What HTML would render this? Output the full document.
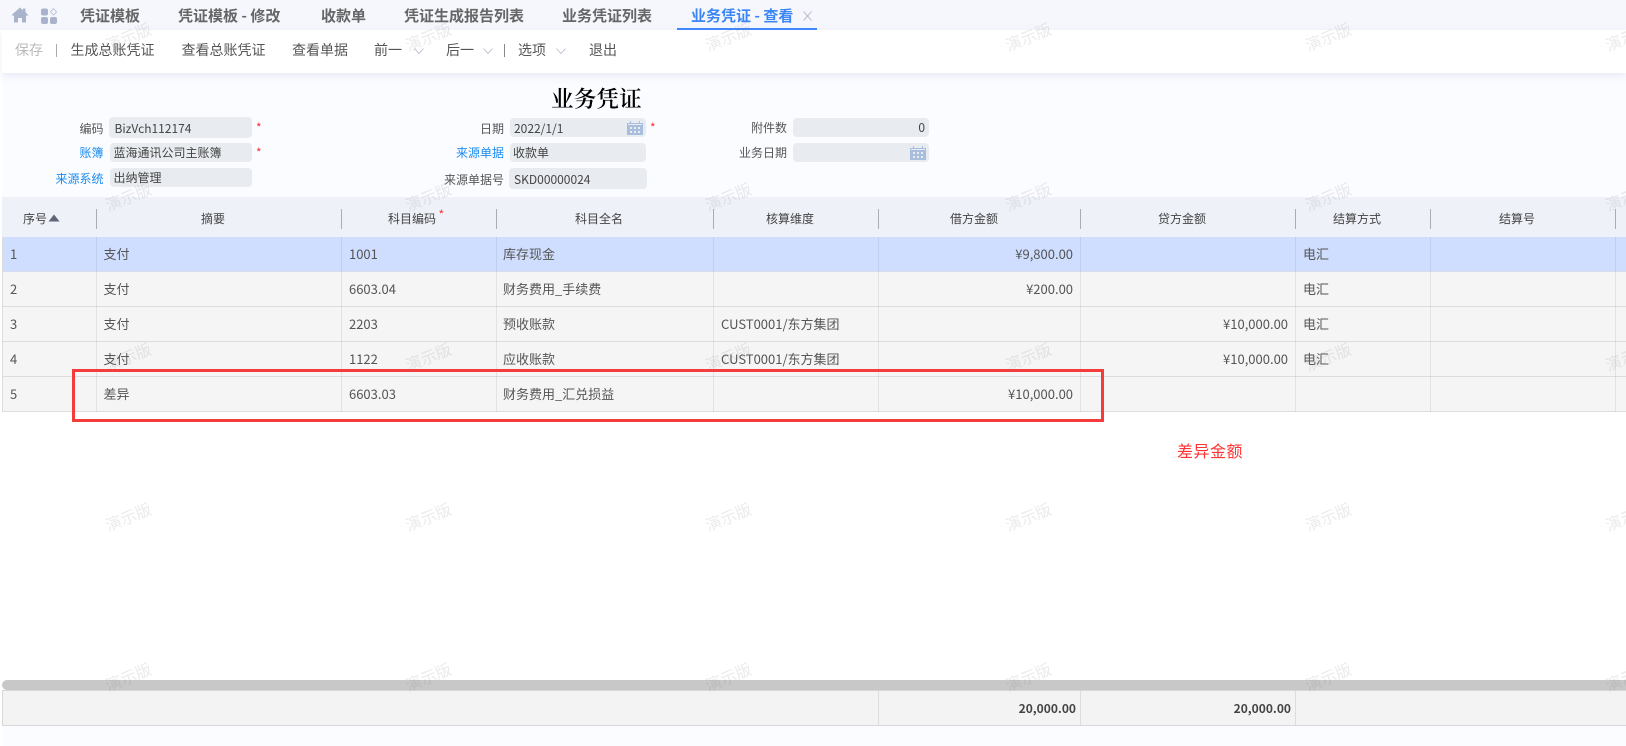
<!DOCTYPE html>
<html lang="zh">
<head>
<meta charset="utf-8">
<title>业务凭证</title>
<style>
html,body{margin:0;padding:0}
body{width:1626px;height:746px;position:relative;overflow:hidden;background:#fff;font-family:"Noto Sans CJK SC","Liberation Sans",sans-serif;color:#444}
div,span{position:absolute;box-sizing:border-box}
.t{white-space:nowrap;line-height:20px}
.tab{font-size:15px;font-weight:700;color:#666;top:6px}
.bar{font-size:14px;color:#555;top:40px}
.lb{font-size:12px;color:#555;text-align:right}
.bl{color:#1a8cf0}
.v{font-size:12px;color:#444}
.in{background:#e8ebef;border-radius:4px}
.st{color:#f33;font-size:12px;line-height:12px}
.h{font-size:12px;color:#444;top:209px}
.c{font-size:13px;color:#555}
.r{text-align:right}
.row{left:2px;width:1624px;height:35px;background:#f5f5f5;border-bottom:1px solid #dcdcdc}
.col{top:237px;height:175px;width:1px;background:rgba(0,0,0,.07)}
.sep{top:209px;height:20px;width:1px;background:#a9aeb6}
.fs{top:691px;height:34px;width:1px;background:#dcdcdc}
.w{font-size:16px;line-height:20px;color:rgba(120,120,120,.15);transform:translate(-50%,-50%) rotate(-22deg);white-space:nowrap;z-index:9}
</style>
</head>
<body>
<!-- page backgrounds -->
<div style="left:2px;top:30px;width:1624px;height:167px;background:#fbfcff"></div>
<div style="left:0;top:0;width:1626px;height:30px;background:#f5f7fc"></div>
<div style="left:2px;top:30px;width:1624px;height:43px;background:#fff;box-shadow:0 3px 8px rgba(190,200,225,.3)"></div>
<div style="left:2px;top:725px;width:1624px;height:21px;background:#fbfcff"></div>

<!-- tab icons -->
<svg style="position:absolute;left:12px;top:7px" width="16" height="16" viewBox="0 0 16 16"><path d="M8 0.5L11 3.2V1.5h2.5v3.9L16 7.6V8.6H14V15.5H10V11H6V15.5H2V8.6H0V7.6z" fill="#a9b4cc"/></svg>
<svg style="position:absolute;left:41px;top:8px" width="16" height="16" viewBox="0 0 16 16"><rect x="0" y="0.5" width="7" height="7" rx="2" fill="#a9b4cc"/><rect x="0" y="9" width="7" height="7" rx="2" fill="#a9b4cc"/><rect x="9" y="9" width="7" height="7" rx="2" fill="#a9b4cc"/><path d="M12.5 0.6L15.6 3.8L12.5 7L9.4 3.8z" fill="none" stroke="#b4bdd2" stroke-width=".8"/></svg>

<!-- tabs -->
<span class="t tab" style="left:80px">凭证模板</span>
<span class="t tab" style="left:178px">凭证模板 - 修改</span>
<span class="t tab" style="left:321px">收款单</span>
<span class="t tab" style="left:404px">凭证生成报告列表</span>
<span class="t tab" style="left:562px">业务凭证列表</span>
<span class="t tab" style="left:691px;color:#3a86f5">业务凭证 - 查看</span>
<svg style="position:absolute;left:803px;top:11px" width="9" height="10" viewBox="0 0 9 10"><path d="M.5.5l8 9M8.5.5l-8 9" stroke="#aab2c4" stroke-width=".9" fill="none"/></svg>
<div style="left:677px;top:28px;width:140px;height:2px;background:#3f86ff"></div>

<!-- toolbar -->
<span class="t bar" style="left:15px;color:#bbb">保存</span>
<div style="left:56px;top:44px;width:1px;height:13px;background:#aaa"></div>
<span class="t bar" style="left:70.5px">生成总账凭证</span>
<span class="t bar" style="left:181.5px">查看总账凭证</span>
<span class="t bar" style="left:292px">查看单据</span>
<span class="t bar" style="left:374px">前一</span>
<svg style="position:absolute;left:414px;top:48px" width="10" height="6" viewBox="0 0 10 6"><path d="M.5.5L5 5.5L9.5.5" fill="none" stroke="#b4bccc" stroke-width=".9"/></svg>
<span class="t bar" style="left:446px">后一</span>
<svg style="position:absolute;left:483px;top:48px" width="10" height="6" viewBox="0 0 10 6"><path d="M.5.5L5 5.5L9.5.5" fill="none" stroke="#b4bccc" stroke-width=".9"/></svg>
<div style="left:504px;top:44px;width:1px;height:13px;background:#888"></div>
<span class="t bar" style="left:518px">选项</span>
<svg style="position:absolute;left:556px;top:48px" width="10" height="6" viewBox="0 0 10 6"><path d="M.5.5L5 5.5L9.5.5" fill="none" stroke="#b4bccc" stroke-width=".9"/></svg>
<span class="t bar" style="left:589px">退出</span>

<!-- title -->
<span class="t" style="left:551px;top:85px;font-family:'Noto Serif CJK SC','Liberation Serif',serif;font-size:22.5px;font-weight:600;line-height:26px;letter-spacing:.2px;color:#000">业务凭证</span>

<!-- form -->
<div class="in" style="left:109px;top:117px;width:143px;height:21px"></div>
<div class="in" style="left:110px;top:143px;width:142px;height:19px"></div>
<div class="in" style="left:110px;top:168px;width:142px;height:19px"></div>
<div class="in" style="left:510px;top:118px;width:136px;height:19px"></div>
<div class="in" style="left:510px;top:143px;width:136px;height:19px"></div>
<div class="in" style="left:509px;top:168px;width:138px;height:21px"></div>
<div class="in" style="left:793px;top:118px;width:136px;height:19px"></div>
<div class="in" style="left:793px;top:143px;width:136px;height:19px"></div>

<span class="t lb" style="right:1522.5px;top:119px">编码</span>
<span class="t lb bl" style="right:1522.5px;top:143px">账簿</span>
<span class="t lb bl" style="right:1522.5px;top:169px">来源系统</span>
<span class="t lb" style="right:1122px;top:119px">日期</span>
<span class="t lb bl" style="right:1122px;top:143px">来源单据</span>
<span class="t lb" style="right:1122px;top:170px">来源单据号</span>
<span class="t lb" style="right:839px;top:118px">附件数</span>
<span class="t lb" style="right:839px;top:143px">业务日期</span>

<span class="t v" style="left:114.5px;top:119px">BizVch112174</span>
<span class="t v" style="left:113.5px;top:143px">蓝海通讯公司主账簿</span>
<span class="t v" style="left:113.5px;top:168px">出纳管理</span>
<span class="t v" style="left:514px;top:119px">2022/1/1</span>
<span class="t v" style="left:513px;top:143px">收款单</span>
<span class="t v" style="left:514px;top:170px">SKD00000024</span>
<span class="t v" style="right:701px;top:118px">0</span>

<span class="t st" style="left:256px;top:122px">*</span>
<span class="t st" style="left:256px;top:147px">*</span>
<span class="t st" style="left:650px;top:122px">*</span>

<svg style="position:absolute;left:627px;top:121px" width="16" height="14" viewBox="0 0 16 14"><path d="M0 2h3V0h1v2h8V0h1v2h3v12H0z" fill="#a9bedd"/><g fill="#e8ebef"><rect x="1" y="3" width="14" height="1"/><rect x="3" y="6" width="2" height="2"/><rect x="7" y="6" width="2" height="2"/><rect x="11" y="6" width="2" height="2"/><rect x="3" y="10" width="2" height="2"/><rect x="7" y="10" width="2" height="2"/><rect x="11" y="10" width="2" height="2"/></g></svg>
<svg style="position:absolute;left:910px;top:146px" width="16" height="14" viewBox="0 0 16 14"><path d="M0 2h3V0h1v2h8V0h1v2h3v12H0z" fill="#a9bedd"/><g fill="#e8ebef"><rect x="1" y="3" width="14" height="1"/><rect x="3" y="6" width="2" height="2"/><rect x="7" y="6" width="2" height="2"/><rect x="11" y="6" width="2" height="2"/><rect x="3" y="10" width="2" height="2"/><rect x="7" y="10" width="2" height="2"/><rect x="11" y="10" width="2" height="2"/></g></svg>

<!-- table header -->
<div style="left:2px;top:197px;width:1624px;height:40px;background:#eef1f8"></div>
<div class="sep" style="left:96px"></div>
<div class="sep" style="left:341px"></div>
<div class="sep" style="left:496px"></div>
<div class="sep" style="left:713px"></div>
<div class="sep" style="left:878px"></div>
<div class="sep" style="left:1080px"></div>
<div class="sep" style="left:1295px"></div>
<div class="sep" style="left:1430px"></div>
<div class="sep" style="left:1615px"></div>
<span class="t h" style="left:23px">序号</span>
<svg style="position:absolute;left:48px;top:214px" width="12" height="8" viewBox="0 0 12 8"><path d="M6 0.5L11.5 7.5H0.5z" fill="#5f6476"/></svg>
<span class="t h" style="left:201px">摘要</span>
<span class="t h" style="left:388px">科目编码</span>
<span class="t st" style="left:438.5px;top:209px">*</span>
<span class="t h" style="left:575px">科目全名</span>
<span class="t h" style="left:766px">核算维度</span>
<span class="t h" style="left:950px">借方金额</span>
<span class="t h" style="left:1158px">贷方金额</span>
<span class="t h" style="left:1333px">结算方式</span>
<span class="t h" style="left:1499px">结算号</span>

<!-- rows -->
<div class="row" style="top:237px;background:#cfdeff;border-bottom-color:#d6dcea"></div>
<div class="row" style="top:272px"></div>
<div class="row" style="top:307px"></div>
<div class="row" style="top:342px"></div>
<div class="row" style="top:377px"></div>
<div style="left:2px;top:237px;width:1px;height:175px;background:#dcdcdc"></div>
<div class="col" style="left:96px"></div>
<div class="col" style="left:341px"></div>
<div class="col" style="left:496px"></div>
<div class="col" style="left:713px"></div>
<div class="col" style="left:878px"></div>
<div class="col" style="left:1080px"></div>
<div class="col" style="left:1295px"></div>
<div class="col" style="left:1430px"></div>
<div class="col" style="left:1615px"></div>

<span class="t c" style="left:10px;top:244px">1</span><span class="t c" style="left:103.5px;top:244px">支付</span><span class="t c" style="left:349px;top:244px">1001</span><span class="t c" style="left:503px;top:244px">库存现金</span><span class="t c r" style="right:553px;top:244px">¥9,800.00</span><span class="t c" style="left:1303px;top:244px">电汇</span>
<span class="t c" style="left:10px;top:279px">2</span><span class="t c" style="left:103.5px;top:279px">支付</span><span class="t c" style="left:349px;top:279px">6603.04</span><span class="t c" style="left:503px;top:279px">财务费用_手续费</span><span class="t c r" style="right:553px;top:279px">¥200.00</span><span class="t c" style="left:1303px;top:279px">电汇</span>
<span class="t c" style="left:10px;top:314px">3</span><span class="t c" style="left:103.5px;top:314px">支付</span><span class="t c" style="left:349px;top:314px">2203</span><span class="t c" style="left:503px;top:314px">预收账款</span><span class="t c" style="left:721px;top:314px">CUST0001/东方集团</span><span class="t c r" style="right:338px;top:314px">¥10,000.00</span><span class="t c" style="left:1303px;top:314px">电汇</span>
<span class="t c" style="left:10px;top:349px">4</span><span class="t c" style="left:103.5px;top:349px">支付</span><span class="t c" style="left:349px;top:349px">1122</span><span class="t c" style="left:503px;top:349px">应收账款</span><span class="t c" style="left:721px;top:349px">CUST0001/东方集团</span><span class="t c r" style="right:338px;top:349px">¥10,000.00</span><span class="t c" style="left:1303px;top:349px">电汇</span>
<span class="t c" style="left:10px;top:384px">5</span><span class="t c" style="left:103.5px;top:384px">差异</span><span class="t c" style="left:349px;top:384px">6603.03</span><span class="t c" style="left:503px;top:384px">财务费用_汇兑损益</span><span class="t c r" style="right:553px;top:384px">¥10,000.00</span>

<!-- red annotation -->
<div style="left:72px;top:369px;width:1032px;height:53px;border:3px solid #f53c3c;z-index:5"></div>
<span class="t" style="left:1177px;top:440px;font-size:16px;letter-spacing:.5px;color:#f33">差异金额</span>

<!-- scrollbar -->
<div style="left:2px;top:680px;width:1624px;height:10px;background:#c8c8c8;border-radius:5px 0 0 5px"></div>

<!-- footer -->
<div style="left:2px;top:690px;width:1624px;height:36px;background:#f3f3f3;border:1px solid #d8d8d8;border-right:0"></div>
<div class="fs" style="left:878px"></div>
<div class="fs" style="left:1080px"></div>
<div class="fs" style="left:1295px"></div>
<span class="t" style="right:550px;top:699px;font-size:12px;font-weight:700;color:#444">20,000.00</span>
<span class="t" style="right:335px;top:699px;font-size:12px;font-weight:700;color:#444">20,000.00</span>

<!-- watermarks -->
<span class="w" style="left:128px;top:36px">演示版</span><span class="w" style="left:428px;top:36px">演示版</span><span class="w" style="left:728px;top:36px">演示版</span><span class="w" style="left:1028px;top:36px">演示版</span><span class="w" style="left:1328px;top:36px">演示版</span><span class="w" style="left:1628px;top:36px">演示版</span>
<span class="w" style="left:128px;top:196px">演示版</span><span class="w" style="left:428px;top:196px">演示版</span><span class="w" style="left:728px;top:196px">演示版</span><span class="w" style="left:1028px;top:196px">演示版</span><span class="w" style="left:1328px;top:196px">演示版</span><span class="w" style="left:1628px;top:196px">演示版</span>
<span class="w" style="left:128px;top:356px">演示版</span><span class="w" style="left:428px;top:356px">演示版</span><span class="w" style="left:728px;top:356px">演示版</span><span class="w" style="left:1028px;top:356px">演示版</span><span class="w" style="left:1328px;top:356px">演示版</span><span class="w" style="left:1628px;top:356px">演示版</span>
<span class="w" style="left:128px;top:516px">演示版</span><span class="w" style="left:428px;top:516px">演示版</span><span class="w" style="left:728px;top:516px">演示版</span><span class="w" style="left:1028px;top:516px">演示版</span><span class="w" style="left:1328px;top:516px">演示版</span><span class="w" style="left:1628px;top:516px">演示版</span>
<span class="w" style="left:128px;top:676px">演示版</span><span class="w" style="left:428px;top:676px">演示版</span><span class="w" style="left:728px;top:676px">演示版</span><span class="w" style="left:1028px;top:676px">演示版</span><span class="w" style="left:1328px;top:676px">演示版</span><span class="w" style="left:1628px;top:676px">演示版</span>
</body>
</html>
